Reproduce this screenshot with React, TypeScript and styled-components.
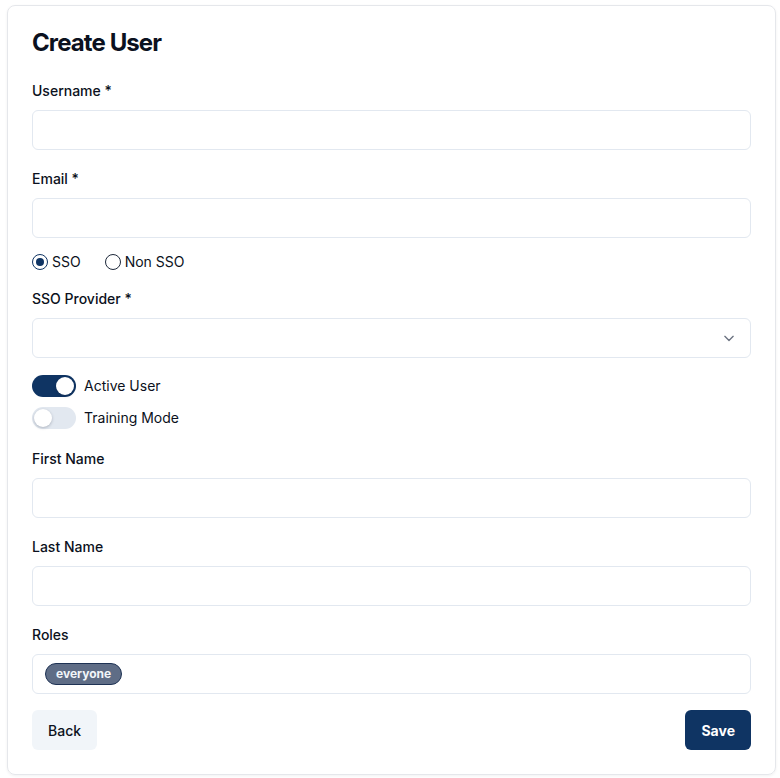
import React, { useState } from "react";
import styled, { createGlobalStyle } from "styled-components";

const Global = createGlobalStyle`
  html, body { margin: 0; padding: 0; background: #ffffff; }
  body { font-family: Inter, "Noto Sans", "Liberation Sans", sans-serif; color: #0f172a; }
  * { box-sizing: border-box; }
`;

const NAVY = "#0f3463";

const Page = styled.div`
  padding: 5px 4px 3px 7px;
`;

const Card = styled.form`
  border: 1px solid #e5e7eb;
  border-radius: 8px;
  box-shadow: 0 1px 3px rgba(15, 23, 42, 0.06);
  padding: 21px 24px 24px;
  display: flex;
  flex-direction: column;
`;

const Title = styled.h1`
  margin: 0 0 22px;
  font-size: 24px;
  line-height: 32px;
  font-weight: 700;
  letter-spacing: -0.9px;
  color: #0b1120;
`;

const Field = styled.div`
  display: flex;
  flex-direction: column;
  margin-bottom: ${(p: { $mb?: number }) => (p.$mb ?? 19)}px;
`;

const Label = styled.label`
  font-size: 14px;
  line-height: 20px;
  font-weight: 500;
  color: #0b1120;
  margin-bottom: 9px;
`;

const Input = styled.input`
  height: 40px;
  width: 100%;
  border: 1px solid #e2e8f0;
  border-radius: 6px;
  padding: 0 12px;
  font: inherit;
  font-size: 14px;
  outline: none;
  background: #fff;
`;

const SelectBox = styled.div`
  height: 40px;
  border: 1px solid #e2e8f0;
  border-radius: 6px;
  padding: 0 11px 0 12px;
  display: flex;
  align-items: center;
  justify-content: flex-end;
  color: #6b7280;
`;

const RadioRow = styled.div`
  display: flex;
  align-items: center;
  gap: 24px;
  margin: 16px 0 19px;
  height: 16px;
`;

const RadioItem = styled.label`
  display: flex;
  align-items: center;
  gap: 4px;
  font-size: 14px;
  line-height: 20px;
  color: #0b1120;
  cursor: pointer;
`;

const RadioCircle = styled.span<{ $checked?: boolean }>`
  width: 16px;
  height: 16px;
  border-radius: 50%;
  border: 1.5px solid ${(p) => (p.$checked ? NAVY : "#1e293b")};
  display: flex;
  align-items: center;
  justify-content: center;
  &::after {
    content: "";
    width: 8px;
    height: 8px;
    border-radius: 50%;
    background: ${(p) => (p.$checked ? NAVY : "transparent")};
  }
`;

const ToggleGroup = styled.div`
  display: flex;
  flex-direction: column;
  gap: 10px;
  margin: 17px 0 20px;
`;

const ToggleRow = styled.label`
  display: flex;
  align-items: center;
  gap: 8px;
  font-size: 14px;
  line-height: 20px;
  color: #0b1120;
  cursor: pointer;
`;

const Track = styled.span<{ $on?: boolean }>`
  width: 44px;
  height: 22px;
  border-radius: 11px;
  background: ${(p) => (p.$on ? NAVY : "#e2e8f0")};
  display: flex;
  align-items: center;
  padding: 2px;
  justify-content: ${(p) => (p.$on ? "flex-end" : "flex-start")};
`;

const Knob = styled.span`
  width: 18px;
  height: 18px;
  border-radius: 50%;
  background: #fff;
  box-shadow: 0 1px 3px rgba(15, 23, 42, 0.25);
`;

const RolesBox = styled.div`
  height: 40px;
  border: 1px solid #e2e8f0;
  border-radius: 6px;
  padding: 0 12px;
  display: flex;
  align-items: center;
  gap: 6px;
`;

const Chip = styled.span`
  display: inline-flex;
  align-items: center;
  height: 22px;
  padding: 0 10px;
  border-radius: 11px;
  background: #5f6d86;
  border: 1px solid #1e3254;
  color: #f1f5f9;
  font-size: 12px;
  font-weight: 700;
  line-height: 16px;
`;

const Actions = styled.div`
  display: flex;
  justify-content: space-between;
  margin-top: -3px;
`;

const Button = styled.button<{ $primary?: boolean }>`
  height: 40px;
  padding: 0 16px;
  border: none;
  border-radius: 6px;
  font-family: inherit;
  font-size: 14px;
  font-weight: ${(p) => (p.$primary ? 700 : 500)};
  background: ${(p) => (p.$primary ? NAVY : "#f1f5f9")};
  color: ${(p) => (p.$primary ? "#ffffff" : "#0b1120")};
  cursor: pointer;
`;

export default function App() {
  const [sso, setSso] = useState(true);
  const [active, setActive] = useState(true);
  const [training, setTraining] = useState(false);
  return (
    <>
      <Global />
      <Page>
        <Card onSubmit={(e) => e.preventDefault()}>
          <Title>Create User</Title>
          <Field>
            <Label>Username *</Label>
            <Input />
          </Field>
          <Field $mb={0}>
            <Label>Email *</Label>
            <Input />
          </Field>
          <RadioRow>
            <RadioItem onClick={() => setSso(true)}>
              <RadioCircle $checked={sso} />
              SSO
            </RadioItem>
            <RadioItem onClick={() => setSso(false)}>
              <RadioCircle $checked={!sso} />
              Non SSO
            </RadioItem>
          </RadioRow>
          <Field $mb={0}>
            <Label>SSO Provider *</Label>
            <SelectBox>
              <svg width="20" height="20" viewBox="0 0 24 24" fill="none" stroke="#6b7280" strokeWidth="1.6" strokeLinecap="round" strokeLinejoin="round">
                <path d="m7 10 5 5 5-5" />
              </svg>
            </SelectBox>
          </Field>
          <ToggleGroup>
            <ToggleRow onClick={() => setActive(!active)}>
              <Track $on={active}>
                <Knob />
              </Track>
              Active User
            </ToggleRow>
            <ToggleRow onClick={() => setTraining(!training)}>
              <Track $on={training}>
                <Knob />
              </Track>
              Training Mode
            </ToggleRow>
          </ToggleGroup>
          <Field>
            <Label>First Name</Label>
            <Input />
          </Field>
          <Field>
            <Label>Last Name</Label>
            <Input />
          </Field>
          <Field>
            <Label>Roles</Label>
            <RolesBox>
              <Chip>everyone</Chip>
            </RolesBox>
          </Field>
          <Actions>
            <Button type="button">Back</Button>
            <Button type="submit" $primary>
              Save
            </Button>
          </Actions>
        </Card>
      </Page>
    </>
  );
}
